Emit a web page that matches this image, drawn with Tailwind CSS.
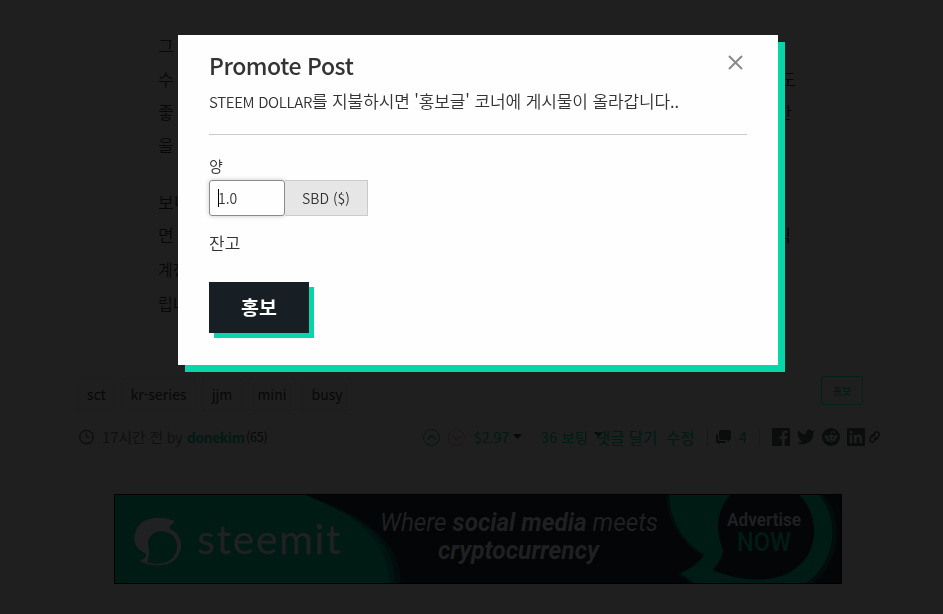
<!DOCTYPE html>
<html lang="ko">
<head>
    <meta charset="UTF-8">
    <meta name="viewport" content="width=device-width, initial-scale=1.0">
    <title>Promote Post</title>
    <script src="https://cdn.jsdelivr.net/npm/@tailwindcss/browser@4"></script>
</head>
<body class="bg-[#1f1f1f] text-[#080808] font-['Noto_Sans_CJK_KR','Noto_Sans',sans-serif] overflow-hidden">
    <!-- Post page -->
    <main class="h-[614px] overflow-hidden">
        <article class="ml-[158px] w-[638px] pt-[29px] h-[372px] text-[17px] leading-[33px] font-[350]">
            <p class="flex justify-between pr-[5px]"><span>그</span></p>
            <p class="flex justify-between"><span>수</span><span>도</span></p>
            <p class="flex justify-between pr-[4px]"><span>좋</span><span>한</span></p>
            <p class="flex justify-between"><span>을</span></p>
            <p class="flex justify-between mt-6"><span>보니</span></p>
            <p class="flex justify-between pr-[5px]"><span>면</span><span>식</span></p>
            <p class="mt-0.5 text-[16px]">계정</p>
            <p class="mt-px text-[16px]">립니</p>
        </article>

        <div class="flex justify-between pl-[78px] pr-[80px] h-[39px]">
            <ul class="flex gap-[6px] mt-[6px] text-[14px]">
                <li class="w-[37px] h-[33px] leading-[30px] text-center rounded border border-[#1d1d1d]">sct</li>
                <li class="w-[75px] h-[33px] leading-[30px] text-center rounded border border-[#1d1d1d]">kr-series</li>
                <li class="w-[40px] h-[33px] leading-[30px] text-center rounded border border-[#1d1d1d]">jjm</li>
                <li class="w-[48px] h-[33px] leading-[30px] text-center rounded border border-[#1d1d1d]">mini</li>
                <li class="w-[50px] h-[33px] leading-[30px] text-center rounded border border-[#1d1d1d]">busy</li>
            </ul>
            <button class="mt-1 w-[42px] h-[29px] rounded-[3px] border border-[#00201a] text-[10px] text-[#001a14]">홍보</button>
        </div>

        <div class="flex items-center h-[20px] mt-[16px] pl-[79px] text-[14px] leading-[20px] text-[#001a14] whitespace-nowrap">
            <svg class="w-[15px] h-[16px]" viewBox="0 0 15 16" fill="none" stroke="#101010"><circle cx="7.5" cy="8" r="6.8" stroke-width="1.4"/><path d="M7.5 3.5V8.5H11" stroke-width="1.2"/><path d="M7.5 13v1M2 8h1M12 8h1"/></svg>
            <span class="ml-[8px] w-[85px] tracking-[-0.2px] text-[#101010]"><span class="text-[15px]">17시간 전</span> by</span>
            <span class="w-[59px] text-[13.5px] tracking-[-0.2px] font-bold">donekim</span>
            <span class="w-[177px] text-[12.5px] tracking-[-0.2px] text-[#080808]">(65)</span>
            <svg class="w-[17px] h-[17px]" viewBox="0 0 17 17" fill="none" stroke="#001a14"><circle cx="8.5" cy="8.5" r="8"/><path d="M4.5 10.5l4-4 4 4" stroke-width="1.4"/></svg>
            <svg class="ml-[8px] w-[17px] h-[17px]" viewBox="0 0 17 17" fill="none" stroke="#241616"><circle cx="8.5" cy="8.5" r="8"/><path d="M4.5 7l4 4 4-4" stroke-width="1.4"/></svg>
            <span class="ml-[9px] w-[39px]">$2.97</span>
            <svg class="w-[9px] h-[5px] mb-[2px]" viewBox="0 0 9 5"><path d="M0 0h9L4.5 5z" fill="#080808"/></svg>
            <span class="ml-[19px] w-[53px] tracking-[0.4px]">36 보팅</span>
            <svg class="w-[9px] h-[5px] mb-[5px]" viewBox="0 0 9 5"><path d="M0 0h9L4.5 5z" fill="#080808"/></svg>
            <span class="-ml-[7px] w-[70px] text-[15.5px]">댓글 달기</span>
            <span class="w-[41px] text-[15.5px]">수정</span>
            <span class="w-px h-[18px] bg-[#1a1a1a]"></span>
            <svg class="ml-[8px] w-[16px] h-[14px]" viewBox="0 0 16 14" fill="#0b0d0d"><path d="M5 0h8q2 0 2 2v6q0 2-2 2v2l-2-2H5q-2 0-2-2V2q0-2 2-2z"/><path d="M2 4v5q0 2 2 2h6v1q0 1-1 1H4v1L2 13Q0 13 0 11V6q0-2 2-2z"/></svg>
            <span class="ml-[7px] w-[20px]">4</span>
            <span class="w-px h-[18px] bg-[#1a1a1a]"></span>
            <div class="flex items-center ml-[12px]">
                <svg class="w-[18px] h-[18px]" viewBox="0 0 18 18"><path fill="#0b0d0d" d="M1 0h16q1 0 1 1v16q0 1-1 1h-4.3v-7h2.4l.4-2.8h-2.8V6.5c0-.9.3-1.4 1.4-1.4h1.5V2.6c-.4 0-1.1-.1-2.1-.1-2.2 0-3.6 1.3-3.6 3.7v2H7.5V11h2.4v7H1q-1 0-1-1V1q0-1 1-1z"/></svg>
                <svg class="ml-[7px] w-[18px] h-[18px]" viewBox="0 0 24 24"><path fill="#0b0d0d" d="M24 4.6a10 10 0 0 1-2.8.8 5 5 0 0 0 2.1-2.7 10 10 0 0 1-3.1 1.2 4.9 4.9 0 0 0-8.4 4.5A14 14 0 0 1 1.7 3.2a4.9 4.9 0 0 0 1.5 6.5 5 5 0 0 1-2.2-.6c0 2.3 1.6 4.4 3.9 4.9a5 5 0 0 1-2.2.1 4.9 4.9 0 0 0 4.6 3.4A10 10 0 0 1 0 19.5 14 14 0 0 0 21.5 7 10 10 0 0 0 24 4.6z"/></svg>
                <svg class="ml-[7px] w-[18px] h-[18px]" viewBox="0 0 18 18"><circle cx="9" cy="9" r="9" fill="#0b0d0d"/><ellipse cx="9" cy="10.5" rx="5" ry="3.6" fill="#1f1f1f"/><circle cx="3.8" cy="8.6" r="1.3" fill="#1f1f1f"/><circle cx="14.2" cy="8.6" r="1.3" fill="#1f1f1f"/><circle cx="12.3" cy="4" r="1" fill="#1f1f1f"/><path d="M9 7l.7-3.5 2.6.5" fill="none" stroke="#1f1f1f" stroke-width=".7"/><circle cx="7" cy="9.8" r="1" fill="#0b0d0d"/><circle cx="11" cy="9.8" r="1" fill="#0b0d0d"/><path d="M7 12q2 1.2 4 0" fill="none" stroke="#0b0d0d" stroke-width=".8"/></svg>
                <svg class="ml-[7px] w-[18px] h-[18px]" viewBox="0 0 18 18"><rect width="18" height="18" rx="1" fill="#0b0d0d"/><path fill="#1f1f1f" d="M2.7 6.8h2.6v8.4H2.7zM4 2.7a1.5 1.5 0 1 1 0 3 1.5 1.5 0 0 1 0-3zM7 6.8h2.5v1.1c.4-.7 1.2-1.3 2.5-1.3 2.7 0 3.2 1.7 3.2 4v4.6h-2.6v-4.1c0-1 0-2.2-1.4-2.2S9.6 10 9.6 11v4.2H7z"/></svg>
                <svg class="ml-[4px] w-[11px] h-[14px] overflow-visible" viewBox="0 0 11 14" fill="none" stroke="#0b0d0d" stroke-width="1.5" stroke-linecap="round"><path d="M4 6.5l1.8-3.6a2.4 2.4 0 0 1 4.2 2.2l-1.5 3a2.2 2.2 0 0 1-3 .8"/><path d="M7 7.5l-1.8 3.6a2.4 2.4 0 0 1-4.2-2.2l1.5-3a2.2 2.2 0 0 1 3-.8"/></svg>
            </div>
        </div>

        <!-- Steemit banner -->
        <svg class="ml-[114px] mt-[47px] w-[728px] h-[90px]" viewBox="0 0 728 90">
            <rect width="728" height="90" fill="#040506"/>
            <path d="M192 1C240 20 286 38 287 89H1V1z" fill="#020d0b"/>
            <path d="M192 1C238 20 280 38 281 89H1V1z" fill="#001511"/>
            <path d="M192 1C232 19 273 37 275 89H1V1z" fill="#001a14"/>
            <path fill="#202122" fill-rule="evenodd" d="M61 27C46 21 29 23 23 34C17 46 22 56 31 59C33 62 31 65 25 67C39 74 57 73 64 62C71 50 66 39 55 34Q58 30 61 27zM35 62C37 56 32 51 35 45C39 36 51 35 58 41C66 48 64 61 56 66C49 71 39 70 33 68Q34 66 35 62z"/>
            <text x="83" y="60" font-family="Lato" font-size="41" fill="#202122" stroke="#202122" stroke-width=".3" textLength="145" lengthAdjust="spacingAndGlyphs" letter-spacing="1.5">steemit</text>
            <g font-family="Roboto" font-style="italic" font-size="25" fill="#1f2022">
                <text x="266" y="37" textLength="278" lengthAdjust="spacingAndGlyphs">Where <tspan font-weight="700">social media</tspan> meets</text>
                <text x="324" y="65" font-weight="700" textLength="161" lengthAdjust="spacingAndGlyphs">cryptocurrency</text>
            </g>
            <path d="M552 1C553 30 570 52 588 62Q580 73 563 81L578 89H700C728 65 730 25 710 1z" fill="#020d0b"/>
            <path d="M555 1C556 30 572 50 590 61Q583 73 566 79L580 89H693C724 65 725 25 705 1z" fill="#001a14"/>
            <path d="M617 1C604 13 600 34 609 55Q610 63 599 76C622 86 659 91 679 76C706 60 706 20 685 1z" fill="#040506"/>
            <g font-family="Roboto" text-anchor="middle">
                <text x="650" y="32" font-size="18" font-weight="700" fill="#1f2022" textLength="74" lengthAdjust="spacingAndGlyphs">Advertise</text>
                <text x="650" y="56.5" font-size="25" font-weight="600" fill="#001a14" textLength="54" lengthAdjust="spacingAndGlyphs">NOW</text>
            </g>
            <rect x=".5" y=".5" width="727" height="89" fill="none" stroke="#000"/>
        </svg>
    </main>

    <!-- Promote modal -->
    <div class="fixed inset-0 pl-[178px] pt-[35px]">
        <div class="relative w-[600px] h-[330px] bg-[#fefefe] px-[31px] pt-[14px] text-[#333] font-[350] shadow-[7px_7px_0_0_#06d6a9]">
            <button class="absolute right-[35px] top-[20px]" aria-label="Close">
                <svg class="w-[15px] h-[15px]" viewBox="0 0 15 15" stroke="#8a8a8a" stroke-width="2"><path d="M1 1l13 13M14 1L1 14"/></svg>
            </button>
            <h3 class="h-[34px] text-[23px] leading-[32px] tracking-[-0.45px] font-medium">Promote Post</h3>
            <p class="h-[36px] pt-[5px] text-[17px] leading-[26px] tracking-[-0.12px] whitespace-nowrap"><span class="text-[15px] tracking-[-0.35px]">STEEM DOLLAR</span>를 지불하시면 '홍보글' 코너에 게시물이 올라갑니다..</p>
            <hr class="mt-[15px] border-[#cacaca]">
            <label class="block mt-[19px] text-[15px] leading-[24px]">양</label>
            <div class="flex mt-[2px] h-[36px] text-[14px] leading-[34px]">
                <div class="w-[76px] border border-[#8a8a8a] rounded-[3px] pl-[8px] shadow-[0_0_5px_#cacaca] flex items-center"><span class="w-px h-[18px] bg-black"></span><span class="-ml-px">1.0</span></div>
                <span class="w-[83px] border border-l-0 border-[#cacaca] bg-[#e6e6e6] text-center">SBD ($)</span>
            </div>
            <p class="mt-[14px] text-[17px] leading-[26px]">잔고</p>
            <button class="block mt-[26px] w-[100px] h-[51px] pb-[2px] bg-[#171f24] text-white text-[19.5px] font-bold shadow-[5px_5px_0_0_#06d6a9]">홍보</button>
        </div>
    </div>
</body>
</html>
